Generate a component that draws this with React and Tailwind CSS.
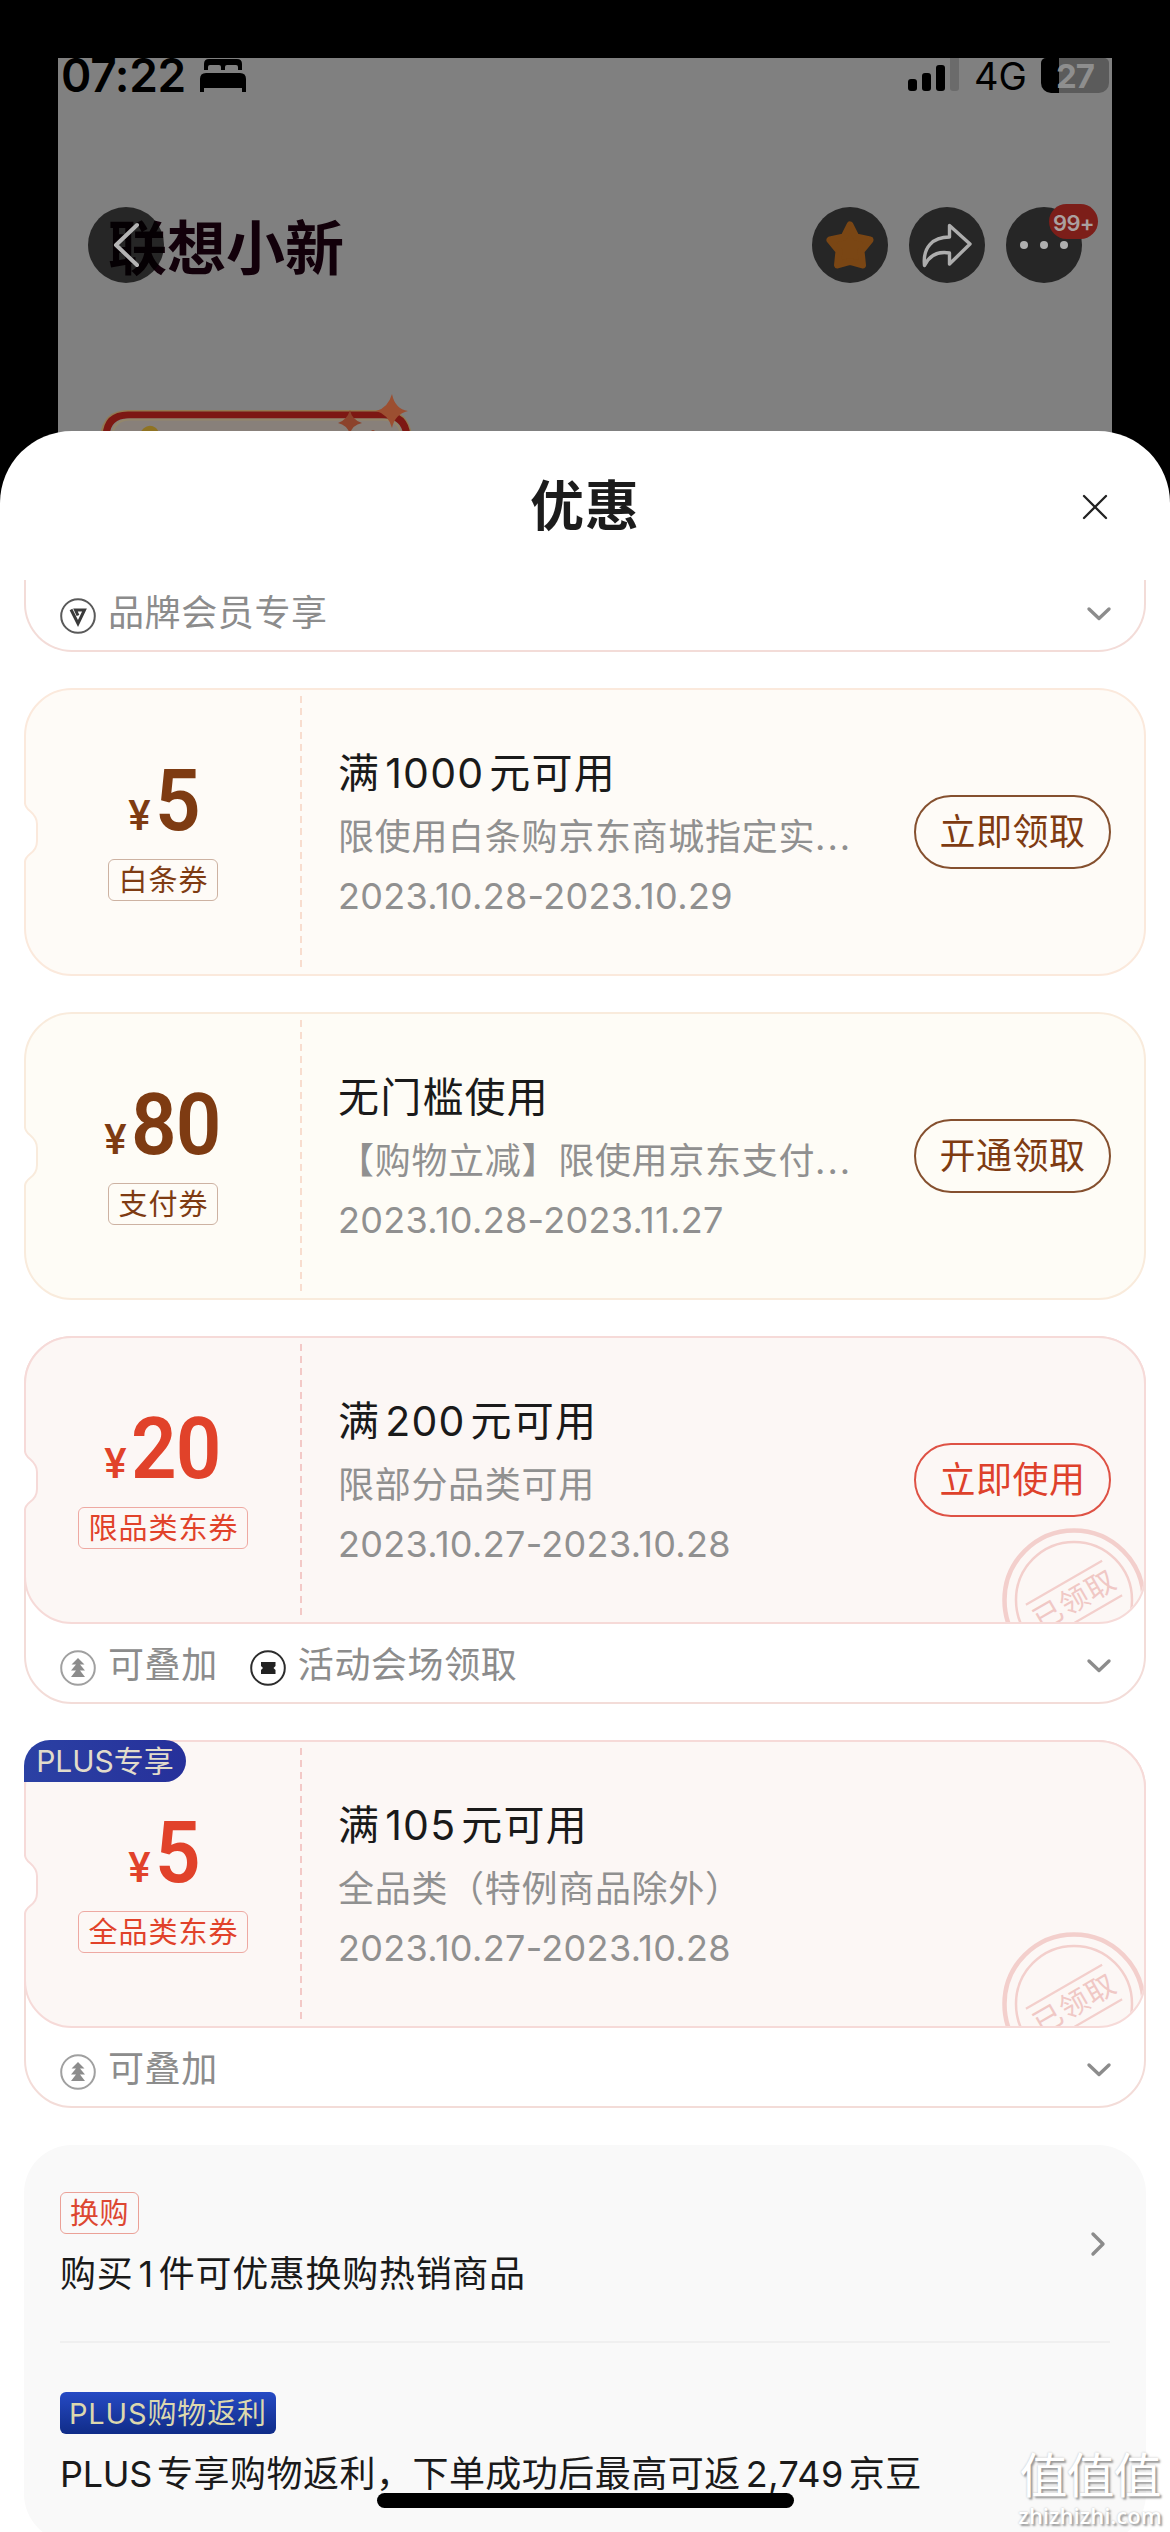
import React from "react";

const FONT = "font-['Inter','Noto_Sans_CJK_SC',sans-serif]";

const TONES = {
  cream: {
    card: "bg-[#fefbf7] border-[#fbe9dc]",
    outer: "border-[#fbe9dc]",
    line: "#fbe9dc",
    dash: "#f8ddcf",
    text: "text-[#7e3b12]",
    tag: "border-[#cdb2a2] text-[#7e3b12]",
    button: "border-[#85502f] text-[#7e3b12]",
  },
  ivory: {
    card: "bg-[#fefcf6] border-[#f9ebdc]",
    outer: "border-[#f9ebdc]",
    line: "#f9ebdc",
    dash: "#f8ddcf",
    text: "text-[#7e3b12]",
    tag: "border-[#cdb2a2] text-[#7e3b12]",
    button: "border-[#85502f] text-[#7e3b12]",
  },
  red: {
    card: "bg-[#fcf7f5] border-[#f6dad8]",
    outer: "border-[#f3dcd8]",
    line: "#f6dad8",
    dash: "#f3c9c7",
    text: "text-[#e1422a]",
    tag: "border-[#eea9a2] text-[#e1422a]",
    button: "border-[#de5245] text-[#de412b]",
  },
};

function Mixed({ text }) {
  return text.split(/(\d[\d,]*)/).map((part, i) =>
    /^\d/.test(part) ? (
      <span key={i} className="mx-[5px]">
        {part}
      </span>
    ) : (
      <React.Fragment key={i}>{part}</React.Fragment>
    )
  );
}

function StatusBar() {
  return (
    <div className="flex h-[36px] items-start justify-between pl-[3px] pr-[3px]">
      <div className="flex items-start">
        <span className="w-[138px] text-[46px] font-semibold leading-[34px] tracking-[-0.300px] text-black">07:22</span>
        <svg width="48" height="33" viewBox="0 0 48 33" className="mt-px">
          <path d="M5 11V5q0-5 5-5h28q5 0 5 5v6h-4V8q0-2-2-2h-9q-2 0-2 2v3h-4V8q0-2-2-2h-9q-2 0-2 2v3z" />
          <path d="M1 33V20q0-6 6-6h34q6 0 6 6v13h-4v-4H5v4z" />
        </svg>
      </div>
      <div className="flex items-start">
        <div className="flex h-[33px] items-end gap-[5px]">
          <i className="h-[12px] w-[9px] rounded-[3px] bg-black" />
          <i className="h-[18px] w-[9px] rounded-[3px] bg-black" />
          <i className="h-[26px] w-[9px] rounded-[3px] bg-black" />
          <i className="h-[33px] w-[9px] rounded-b-[3px] bg-[#6b6b6b]" />
        </div>
        <span className="ml-[15px] w-[67px] text-[38px] leading-[36px] text-black">4G</span>
        <div className="flex h-[35px] w-[68px] items-center justify-center rounded-b-[10px] rounded-t-[5px] bg-[linear-gradient(90deg,#000_0_18px,#5b5b5b_18px)]">
          <span className="text-[33px] font-bold leading-[32px] tracking-[-1px] text-[#8e8e8e]">27</span>
        </div>
      </div>
    </div>
  );
}

function RoundButton({ children }) {
  return <div className="relative flex size-[76px] items-center justify-center rounded-full bg-[#262626]">{children}</div>;
}

function NavBar() {
  return (
    <div className="relative mt-[113px] flex h-[76px] items-center pl-[30px] pr-[30px]">
      <span className="ml-[20px] mt-[8px] text-[59px] font-bold leading-[76px] text-[#12000a]">联想小新</span>
      <div className="absolute left-[30px] top-0 flex size-[76px] items-center justify-center rounded-full bg-black/70">
        <svg width="28" height="46" viewBox="0 0 28 46" fill="none" stroke="#b4b4b4" strokeWidth="4" strokeLinecap="round">
          <path d="M25 3 4 23 25 43" strokeLinejoin="round" />
        </svg>
      </div>
      <div className="ml-auto flex gap-[21px]">
        <RoundButton>
          <svg width="52" height="52" viewBox="0 0 52 52">
            <path
              d="M26 6 32 18 46 21 37 32 38.5 46 26 42.5 13.500 46 15 32 6 21 20 18z"
              fill="#7a4614"
              stroke="#7a4614"
              strokeWidth="7"
              strokeLinejoin="round"
            />
          </svg>
        </RoundButton>
        <RoundButton>
          <svg width="52" height="46" viewBox="0 0 52 46" fill="none" stroke="#adadad" strokeWidth="3.4" strokeLinejoin="round">
            <path d="M28.500 3.500 49 22 28.500 42V31C16 29 8 34 3.500 43.500 1.500 25 12 15 28.500 15z" />
          </svg>
        </RoundButton>
        <RoundButton>
          <div className="flex gap-[12px]">
            <i className="size-[8px] rounded-full bg-[#b0b0b0]" />
            <i className="size-[8px] rounded-full bg-[#b0b0b0]" />
            <i className="size-[8px] rounded-full bg-[#b0b0b0]" />
          </div>
          <div className="absolute left-[43px] top-[-3px] flex h-[35px] w-[49px] items-center justify-center rounded-full bg-[#7c1e19]">
            <span className="mt-[2px] text-[22px] font-semibold leading-none tracking-[-0.700px] text-[#aaa09f]">99+</span>
          </div>
        </RoundButton>
      </div>
    </div>
  );
}

function BannerEdge() {
  return (
    <svg width="320" height="46" viewBox="0 0 320 46" className="ml-[40px] mt-[107px]">
      <path d="M2 60V46Q5 20 30 20H286Q311 20 314 46V60z" fill="#927a52" />
      <path d="M8 60V46Q9 25 30 25H286Q307 25 309 46V60z" fill="#88807a" stroke="#7d1813" strokeWidth="7" />
      <path d="M14 60V46Q16 29.500 32 29.500H284Q302 29.500 303 46" fill="none" stroke="#93866b" strokeWidth="2" />
      <path d="M40 46Q48 31 58 38 62 42 60 46z" fill="#8f7323" />
      <path d="M294 4Q297 19 310 21 297 24 294 38 290 24 278 21 290 18 294 4z" fill="#9c4f31" />
      <path d="M252 20Q254 30 264 33 254 35 252 44 249 35 240 33 249 30 252 20z" fill="#8c432c" />
      <circle cx="275" cy="42" r="2" fill="#8c432c" />
    </svg>
  );
}

function Chevron({ className = "" }) {
  return (
    <svg width="26" height="16" viewBox="0 0 26 16" fill="none" stroke="#8c8c8c" strokeWidth="3.4" strokeLinecap="round" strokeLinejoin="round" className={className}>
      <path d="M3 3 13 12.500 23 3" />
    </svg>
  );
}

const ICONS = {
  brand: (
    <>
      <circle cx="18" cy="18" r="16.800" stroke="#5a5a5a" strokeWidth="2" fill="none" />
      <path d="M11 11.500 18 25.500 24.500 12H15.500L18 17.500" fill="none" stroke="#3a3a3a" strokeWidth="3" />
    </>
  ),
  stack: (
    <>
      <circle cx="18" cy="18" r="16.800" stroke="#a0a0a0" strokeWidth="2" fill="none" />
      <path d="M18 8 24.500 14.500H20L25 20.500H20L25 27H11L16 20.500H11L16 14.500H11.500z" fill="#8c8c8c" />
    </>
  ),
  venue: (
    <>
      <circle cx="18" cy="18" r="16.800" stroke="#2c2c2c" strokeWidth="2" fill="none" />
      <path d="M11 12h14.500v4l-2 2 2 2v4H11v-4l2-2-2-2z" fill="#222" />
    </>
  ),
};

function FooterRow({ items }) {
  return (
    <div className="flex h-[80px] items-center pl-[34px] pr-[32px]">
      <div className="flex items-center gap-[32px]">
        {items.map(([icon, label]) => (
          <div key={label} className="flex items-center gap-[12px]">
            <svg width="36" height="36" viewBox="0 0 36 36" className="mt-[7px]">
              {ICONS[icon]}
            </svg>
            <span className="mt-px text-[36px] leading-[44px] tracking-[0.600px] text-[#8c8c8c]">{label}</span>
          </div>
        ))}
      </div>
      <Chevron className="ml-auto mt-[3px]" />
    </div>
  );
}

function Stamp() {
  return (
    <svg width="146" height="146" viewBox="0 0 146 146" className="absolute left-[975px] top-[189px]">
      <g fill="none" stroke="#f3cfcc">
        <circle cx="73" cy="73" r="69.500" strokeWidth="4.500" />
        <circle cx="73" cy="73" r="58" strokeWidth="2.500" />
        <g transform="rotate(-30 73 73)" strokeWidth="2.200">
          <path d="M29 53H117M29 93H117" />
          <text x="73.500" y="83.500" textAnchor="middle" fontSize="29" letterSpacing="1" fill="#f0c8c5" stroke="none">
            已领取
          </text>
        </g>
      </g>
    </svg>
  );
}

function Coupon({ tone, amount, tag, title, desc, more, date, action, stamp, plus, footer }) {
  const t = TONES[tone];
  const body = (
    <div className={`relative flex h-[288px] overflow-hidden rounded-[48px] border-2 ${t.card}`}>
      <div className="flex w-[274px] flex-col items-center pt-[69px]">
        <div className={`flex h-[84px] items-baseline font-['Roboto'] font-medium leading-[84px] ${t.text}`}>
          <span className="mr-[4px] text-[42px]">¥</span>
          <span className="-mr-[5px] inline-block origin-left scale-x-[0.930] text-[86px] font-semibold tracking-[-1px]">{amount}</span>
        </div>
        <span className={`mt-[16px] flex h-[42px] items-center rounded-[6px] border-[1.500px] px-[9px] text-[29px] leading-none tracking-[1px] ${t.tag}`}>
          <span className="-mr-px">{tag}</span>
        </span>
      </div>
      <svg width="2" height="274" className="mt-[6px] shrink-0">
        <path d="M1 0V274" stroke={t.dash} strokeWidth="2" strokeDasharray="7 5" />
      </svg>
      <div className="flex flex-1 flex-col pl-[36px] pt-[57px]">
        <h3 className="text-[41px] leading-[53px] tracking-[1.200px] text-[#1a1a1a]">
          <Mixed text={title} />
        </h3>
        <p className="mt-[15px] whitespace-nowrap text-[36px] leading-[44px] tracking-[0.700px] text-[#909090]">
          {desc}
          {more && <span className="tracking-[2px]">...</span>}
        </p>
        <p className="mt-[15px] text-[36px] leading-[44px] tracking-[0.320px] text-[#909090]">{date}</p>
      </div>
      {action && (
        <button className={`mr-[33px] h-[74px] w-[197px] shrink-0 self-center rounded-full border-2 text-[36px] leading-none tracking-[0.500px] ${t.button}`}>
          {action}
        </button>
      )}
      {stamp && <Stamp />}
    </div>
  );
  return (
    <section className="relative">
      {footer ? (
        <div className={`h-[368px] rounded-[48px] border-2 bg-white ${t.outer}`}>
          <div className="-mx-[2px] -mt-[2px]">{body}</div>
          <FooterRow items={footer} />
        </div>
      ) : (
        body
      )}
      <svg width="20" height="60" viewBox="0 0 20 60" className="absolute left-[-2px] top-[115px]">
        <path d="M0 1H3Q4 5 8 8 15 14 15 21V38Q15 46 8 51 4 54 3 58H0z" fill="#fff" />
        <path d="M3 0Q3 4 8 8 15 14 15 21V38Q15 46 8 51 3 55 3 59" fill="none" stroke={t.line} strokeWidth="2" />
      </svg>
      {plus && (
        <div className="absolute left-0 top-0 flex h-[42px] w-[162px] items-center justify-center rounded-br-[21px] rounded-tl-[26px] rounded-tr-[21px] bg-[linear-gradient(90deg,#2b41a4,#26309a)] text-[30px] leading-none text-[#e2dccb]">
          {plus}
        </div>
      )}
    </section>
  );
}

function Promotions() {
  return (
    <section className="mt-px h-[397px] rounded-[48px] bg-[#f9f9f9] px-[36px] pt-[47px]">
      <div className="flex h-[151px] items-start justify-between border-b-2 border-[#f0f0f0]">
        <div className="flex flex-col items-start">
          <span className="flex h-[42px] items-center rounded-[6px] border-[1.500px] border-[#eba197] px-[9px] text-[29px] leading-none tracking-[0.500px] text-[#dd4731]">
            换购
          </span>
          <p className="mt-[18px] text-[36px] leading-[44px] tracking-[0.700px] text-[#1a1a1a]">
            <Mixed text="购买1件可优惠换购热销商品" />
          </p>
        </div>
        <svg width="18" height="28" viewBox="0 0 18 28" fill="none" stroke="#8c8c8c" strokeWidth="3.4" strokeLinecap="round" strokeLinejoin="round" className="mr-[3px] mt-[38px]">
          <path d="M4 4 14 14 4 24" />
        </svg>
      </div>
      <div className="flex flex-col items-start pt-[49px]">
        <span className="flex h-[42px] items-center rounded-[6px] bg-[linear-gradient(180deg,#264ac4,#102c88)] px-[9px] text-[29px] leading-none tracking-[0.850px] text-[#dcd8ae]">
          PLUS购物返利
        </span>
        <p className="mt-[18px] whitespace-nowrap text-[36px] leading-[44px] tracking-[0.480px] text-[#1a1a1a]">
          <span className="mr-[5px] tracking-[-0.300px]">PLUS</span>
          <Mixed text="专享购物返利，下单成功后最高可返2,749京豆" />
        </p>
      </div>
    </section>
  );
}

export default function App() {
  return (
    <main className={`relative flex h-[2532px] w-[1170px] flex-col overflow-hidden bg-black pt-[58px] ${FONT}`}>
      <header className="mx-[58px] h-[380px] shrink-0 overflow-hidden bg-[#808080]">
        <StatusBar />
        <NavBar />
        <BannerEdge />
      </header>

      <div className="relative -mt-[7px] flex flex-1 flex-col rounded-t-[72px] bg-white">
        <div className="flex h-[149px] shrink-0 items-center justify-between px-[62px]">
          <span className="w-[26px]" />
          <h2 className="mt-[2px] text-[54px] font-bold leading-none tracking-[1px] text-[#1c1c1c]">优惠</h2>
          <svg width="26" height="26" viewBox="0 0 26 26" stroke="#222" strokeWidth="2.300" strokeLinecap="round" className="mt-[3px]">
            <path d="M2 2 24 24M24 2 2 24" />
          </svg>
        </div>
        <div className="flex flex-col gap-[36px] px-[24px]">
          <div className="flex h-[72px] flex-col justify-end overflow-hidden rounded-b-[48px] border-x-2 border-b-2 border-[#f3dcd8]">
            <div className="-mb-[2px] -mt-[8px]">
              <FooterRow items={[["brand", "品牌会员专享"]]} />
            </div>
          </div>
          <Coupon tone="cream" amount="5" tag="白条券" title="满1000元可用" desc="限使用白条购京东商城指定实" more date="2023.10.28-2023.10.29" action="立即领取" />
          <Coupon tone="ivory" amount="80" tag="支付券" title="无门槛使用" desc="【购物立减】限使用京东支付" more date="2023.10.28-2023.11.27" action="开通领取" />
          <Coupon
            tone="red"
            amount="20"
            tag="限品类东券"
            title="满200元可用"
            desc="限部分品类可用"
            date="2023.10.27-2023.10.28"
            action="立即使用"
            stamp
            footer={[
              ["stack", "可叠加"],
              ["venue", "活动会场领取"],
            ]}
          />
          <Coupon
            tone="red"
            amount="5"
            tag="全品类东券"
            title="满105元可用"
            desc="全品类（特例商品除外）"
            date="2023.10.27-2023.10.28"
            plus="PLUS专享"
            stamp
            footer={[["stack", "可叠加"]]}
          />
          <Promotions />
        </div>
      </div>

      <div className="absolute bottom-[24px] left-[377px] h-[15px] w-[417px] rounded-full bg-black" />
      <div className="absolute bottom-[5px] right-[8px] flex w-[144px] flex-col items-center text-white [text-shadow:2px_2px_2px_#999,0_0_2px_#bbb]">
        <span className="text-[48px] leading-[54px] tracking-[-1px]">值值值</span>
        <span className="font-['Open_Sans'] text-[22px] font-semibold leading-[24px]">zhizhizhi.com</span>
      </div>
    </main>
  );
}
